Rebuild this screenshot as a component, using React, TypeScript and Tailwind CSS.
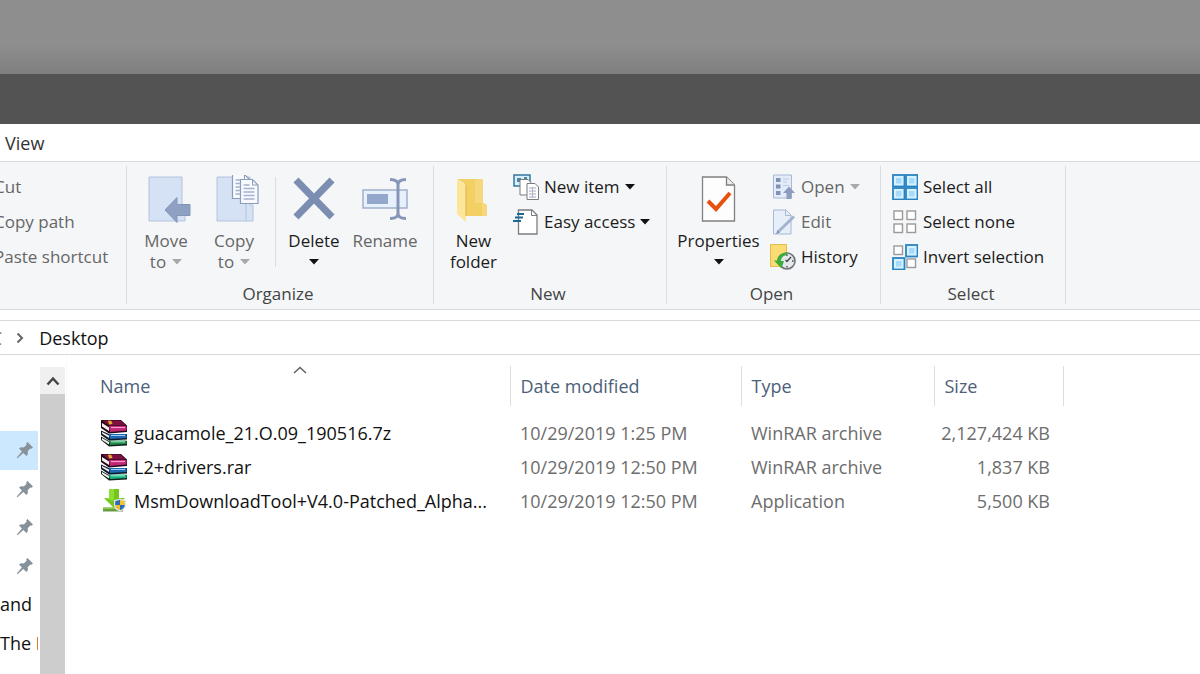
import { useState } from 'react'
import type { ReactNode } from 'react'
import clsx from 'clsx'

interface FileEntry {
  name: string
  modified: string
  type: string
  size: string
  kind: 'archive' | 'app'
  band?: string
}

const FILES: FileEntry[] = [
  { name: 'guacamole_21.O.09_190516.7z', modified: '10/29/2019 1:25 PM', type: 'WinRAR archive', size: '2,127,424 KB', kind: 'archive', band: '#1f8a4c' },
  { name: 'L2+drivers.rar', modified: '10/29/2019 12:50 PM', type: 'WinRAR archive', size: '1,837 KB', kind: 'archive', band: '#17b584' },
  { name: 'MsmDownloadTool+V4.0-Patched_Alpha...', modified: '10/29/2019 12:50 PM', type: 'Application', size: '5,500 KB', kind: 'app' },
]

/* ---------- icons ---------- */

function MoveToIcon() {
  return (
    <svg width="44" height="48" viewBox="0 0 44 48">
      <path d="M1 2h33v26l3 3v15H1z" fill="#d5e1f4" stroke="#b4c3dd" />
      <path d="M17 35 29 22.500v7h13v11H29v7z" fill="#8fa1c3" stroke="#8395b8" />
    </svg>
  )
}

function PageLines({ x, y }: { x: number; y: number }) {
  return (
    <g transform={`translate(${x} ${y})`}>
      <path d="M.5.5h12l5.500 5.500v18.500H.5z" fill="#f7faff" stroke="#8d9cb9" strokeWidth="1.200" />
      <path d="M12.500.5v5.500H18" fill="none" stroke="#8d9cb9" />
      <path d="M3.500 6h6M3.500 9.500h11M3.500 13h11M3.500 16.500h11M3.500 20h11" stroke="#a5b3cf" strokeWidth="1.400" />
    </g>
  )
}

function CopyToIcon() {
  return (
    <svg width="44" height="48" viewBox="0 0 44 48">
      <path d="M1 2h33v28h3v16H1z" fill="#d5e1f4" stroke="#b4c3dd" />
      <path d="M30 28v18" stroke="#b4c3dd" />
      <PageLines x={16} y={-1} />
      <PageLines x={24} y={4} />
    </svg>
  )
}

function DeleteIcon() {
  return (
    <svg width="44" height="48" viewBox="0 0 44 48">
      <path d="m4 5 36 37M40 5 4 42" stroke="#7c8db2" strokeWidth="7" />
    </svg>
  )
}

function RenameIcon() {
  return (
    <svg width="48" height="48" viewBox="0 0 48 48">
      <path d="M2 15h44v18H2z" fill="#e6f1fb" stroke="#9fb0cc" strokeWidth="1.500" />
      <path d="M6 19h21v10H6z" fill="#94a8cc" />
      <path d="M29 4.500c5 0 8 1 8 5v29c0 4-3 5-8 5M45 4.500c-5 0-8 1-8 5v29c0 4 3 5 8 5" fill="none" stroke="#8596b8" strokeWidth="3" />
    </svg>
  )
}

function NewFolderIcon() {
  return (
    <svg width="40" height="48" viewBox="0 0 40 48">
      <path d="M3 4h26v24l4 2v11H10V8z" fill="#f3d064" />
      <path d="M21 4h8v24l4 2v11h-5V28h-7z" fill="#f6d87c" />
      <path d="M3 4l9 6v37l-9-8z" fill="#fde59a" />
      <path d="M12 10v31" stroke="#dcb24a" />
    </svg>
  )
}

function PropertiesIcon() {
  return (
    <svg width="36" height="48" viewBox="0 0 36 48">
      <path d="M1.500 2h24l8 8v36h-32z" fill="#fdfdfe" stroke="#808080" strokeWidth="1.300" />
      <path d="M25.500 2v8h8" fill="#ececec" stroke="#808080" strokeWidth="1.300" />
      <path d="m7 26 8 8 14-16" fill="none" stroke="#e8500f" strokeWidth="4" />
    </svg>
  )
}

function NewItemIcon() {
  return (
    <svg width="26" height="26" viewBox="0 0 26 26">
      <path d="M1 1h16v11H1z" fill="#d9effa" stroke="#35779e" strokeWidth="1.500" />
      <path d="M4 4h4v4H4zM11 3h3v3h-3z" fill="#4a86a8" />
      <path d="M7 5.500h8l3 3V21H7z" fill="#fff" stroke="#7d7d7d" />
      <path d="M14 9.500h8l3.500 3.500v12.500H14z" fill="#fff" stroke="#7d7d7d" />
      <path d="M16 14h7M16 17h7M16 20h7M16 23h7" stroke="#b4c7e2" strokeWidth="1.400" />
      <path d="M19.500 13v11" stroke="#d9a7b0" />
    </svg>
  )
}

function EasyAccessIcon() {
  return (
    <svg width="26" height="26" viewBox="0 0 26 26">
      <path d="M5.500 1h13.500l5 5v19H5.500z" fill="#fff" stroke="#7d7d7d" strokeWidth="1.300" />
      <path d="M18.500 1v5.500H24" fill="none" stroke="#7d7d7d" />
      <path d="M4 5h7M2 8.500h8M0 12h8" stroke="#1f6a94" strokeWidth="2" />
    </svg>
  )
}

function OpenIcon() {
  return (
    <svg width="26" height="26" viewBox="0 0 26 26">
      <path d="M3.500 1h18v23h-18z" fill="#e3ecf8" stroke="#a9b8d3" />
      <path d="M6 4h4.500v4H6zM6 10.500h4.500v4H6zM6 17h4.500v4H6z" fill="#7f92b5" />
      <path d="M13 5h6M13 8h4M13 11.500h6" stroke="#bccae2" />
      <path d="m19 12.500 6 6.500h-3.500v6h-5v-6H13z" fill="#8c9dbf" />
    </svg>
  )
}

function EditIcon() {
  return (
    <svg width="26" height="26" viewBox="0 0 26 26">
      <path d="M3.500 1h12.500l5 5v19H3.500z" fill="#e6eefa" stroke="#a9b8d3" />
      <path d="M15.500 1v5.500H21" fill="none" stroke="#a9b8d3" />
      <path d="M8 23 24 7.500" stroke="#a3b3d0" strokeWidth="3" />
      <path d="m6 25 1.500-4 2.500 2.500z" fill="#8293b4" />
    </svg>
  )
}

function HistoryIcon() {
  return (
    <svg width="26" height="26" viewBox="0 0 26 26">
      <path d="M.5.500h16v22H.5z" fill="#fbdc74" stroke="#e2bd4d" />
      <circle cx="17" cy="17" r="8" fill="#e4e8ec" stroke="#6d7276" strokeWidth="1.600" />
      <path d="M17 10.500v1.500M17 22v1.500M22 17h1.500M15.500 16l1.500 1.500 4-4.500" fill="none" stroke="#444" strokeWidth="1.300" />
      <path d="M17 8.500c-6 0-9.500 3-10 8H4l7.500 8 2.500-7.500h-3c0-3 2-5.500 6-6z" fill="#3dab3d" />
    </svg>
  )
}

function SquaresIcon({ on }: { on: boolean[] }) {
  const spots = [[1, 1], [14, 1], [1, 14], [14, 14]]
  return (
    <svg width="26" height="26" viewBox="0 0 26 26">
      {spots.map(([x, y], i) =>
        on[i] ? (
          <g key={i}>
            <rect x={x} y={y} width="11.500" height="11.500" fill="#d6f1ff" stroke="#2a83c0" strokeWidth="1.800" />
            <rect x={x + 3} y={y + 3} width="5.500" height="5.500" fill="#a5daf8" />
          </g>
        ) : (
          <rect key={i} x={x + 1} y={y + 1} width="8.500" height="8.500" fill="#fff" stroke="#9a9a9a" strokeWidth="1.400" />
        ),
      )}
    </svg>
  )
}

function ArchiveIcon({ band }: { band: string }) {
  return (
    <svg width="28" height="28" viewBox="0 0 28 28" className="shrink-0">
      {/* bottom book */}
      <path d="M1 17.500 9 22h18v4.500L9 27.500 1 21z" fill="#12211b" />
      <path d="m2 19 7 4v2.500l-7-4.500z" fill="#f5f2ee" />
      <path d="M9 21.500h17.500V25L10 26z" fill={band} />
      <path d="M11 22.800h14" stroke="#a6ecc8" />
      {/* middle book */}
      <path d="M1 11.500 9 15h18v5.500L9 21.500 1 16z" fill="#10182b" />
      <path d="m2 13 7 3.500V19l-7-4.500z" fill="#f5f2ee" />
      <path d="M9 15h17.500v4L10 20z" fill="#1f68b4" />
      <path d="M11 16.500h14" stroke="#9cc9f2" />
      {/* top book */}
      <path d="M1 1h20l6 5.500v6.500L9 14.500 1 9z" fill="#240817" />
      <path d="M2 1.500h18.500l5.500 5H9z" fill="#7d1040" />
      <path d="M9 7h17.500v4.500L10 13z" fill="#c22677" />
      <path d="M11 8.500h14" stroke="#f29ac8" strokeWidth="1.200" />
      <path d="m2 4 7 4.500v3.500L2 7.500z" fill="#f5f2ee" />
      <path d="m8 1.500 3.500.500 1 3-3.500.5z" fill="#e0ac2e" />
    </svg>
  )
}

function AppIcon() {
  return (
    <svg width="28" height="28" viewBox="0 0 28 28" className="shrink-0">
      <path d="M9 2h10v9h6L14 21 4 11h5z" fill="#74c61c" />
      <path d="M9 2h5v12L4 11h5z" fill="#8fdc35" />
      <path d="M3 20.500h20v4H3z" fill="#6a9c42" />
      <path d="M3 20.500h20V22H3z" fill="#8ccf4a" />
      <path d="m20 11.500 6 1.800v4.700c0 3.500-3 5.500-6 6.500-3-1-6-3-6-6.500v-4.700z" fill="#dfe6ec" />
      <path d="m20 12.800-4.800 1.500v3.700H20z" fill="#2d6cb5" />
      <path d="m20 12.800 4.800 1.500v3.700H20z" fill="#f4c430" />
      <path d="M15.200 18H20v5.200c-2.500-.9-4.800-2.500-4.800-5.200z" fill="#f4b92c" />
      <path d="M24.800 18H20v5.200c2.500-.9 4.800-2.500 4.800-5.200z" fill="#2d6cb5" />
    </svg>
  )
}

function PinIcon() {
  return (
    <svg width="18" height="18" viewBox="0 0 18 18" className="shrink-0">
      <path d="m11.500 1 5.500 5.500-1.500 1.200-1.200-.3-2.600 2.800c.5 2.200.2 3.600-1.200 4.800L7.300 12 1.500 17.200l-.7-.7L5.900 10.500 3 7.600c1.300-1.300 2.800-1.600 4.800-1.100l2.800-2.700-.4-1.500z" fill="#87919a" />
    </svg>
  )
}

function Caret({ muted }: { muted?: boolean }) {
  return (
    <svg width="10" height="6" viewBox="0 0 10 6" className="shrink-0">
      <path d="M0 0h10L5 5.500z" fill={muted ? '#a9a9a9' : '#111'} />
    </svg>
  )
}

/* ---------- ribbon ---------- */

function RibbonGroup({ label, children }: { label?: string; children: ReactNode }) {
  return (
    <section className="flex flex-col overflow-hidden border-r border-[#dcdddf]">
      <div className="flex h-[118px] pt-[3px]">{children}</div>
      {label && <h2 className="pr-1 text-center text-[17px] leading-5 text-[#444]">{label}</h2>}
    </section>
  )
}

interface BigButtonProps {
  icon: ReactNode
  lines: string[]
  caret?: boolean
  disabled?: boolean
  className?: string
}

function BigButton({ icon, lines, caret, disabled, className }: BigButtonProps) {
  const inlineCaret = caret && lines.length > 1
  return (
    <button
      disabled={disabled}
      className={clsx('flex shrink-0 flex-col items-center pt-[6px] text-[17px] leading-[21px]', disabled ? 'text-[#666]' : 'text-[#1c1c1c]', className)}
    >
      <span className="mb-[7px] flex h-12">{icon}</span>
      {lines.map((line, i) => (
        <span key={line} className="flex items-center gap-[6px]">
          {line}
          {inlineCaret && i === lines.length - 1 && <Caret muted={disabled} />}
        </span>
      ))}
      {caret && !inlineCaret && <span className="pt-2"><Caret muted={disabled} /></span>}
    </button>
  )
}

interface SmallButtonProps {
  icon?: ReactNode
  label: string
  caret?: boolean
  disabled?: boolean
}

function SmallButton({ icon, label, caret, disabled }: SmallButtonProps) {
  return (
    <button
      disabled={disabled}
      className={clsx('flex h-[35px] items-center gap-[5px] text-[17px] whitespace-nowrap', disabled ? 'text-[#666]' : 'text-[#1c1c1c]')}
    >
      {icon}
      {label}
      {caret && <Caret muted={disabled} />}
    </button>
  )
}

function Ribbon() {
  return (
    <div className="grid grid-cols-[127px_307px_233px_214px_185px_1fr] border-y border-[#d9dadc] bg-[#f5f6f8] pt-1 pb-[5px]">
      <RibbonGroup>
        <div className="-ml-[6px]">
          <SmallButton label="Cut" disabled />
          <SmallButton label="Copy path" disabled />
          <SmallButton label="Paste shortcut" disabled />
        </div>
      </RibbonGroup>

      <RibbonGroup label="Organize">
        <BigButton className="ml-1 w-[70px]" icon={<span className="pl-2"><MoveToIcon /></span>} lines={['Move', 'to']} caret disabled />
        <BigButton className="w-[66px]" icon={<span className="pl-2"><CopyToIcon /></span>} lines={['Copy', 'to']} caret disabled />
        <div className="mr-1 ml-2 mt-2 h-[90px] w-px bg-[#dcdddf]" />
        <BigButton className="w-[68px]" icon={<DeleteIcon />} lines={['Delete']} caret />
        <BigButton className="w-[74px]" icon={<RenameIcon />} lines={['Rename']} disabled />
      </RibbonGroup>

      <RibbonGroup label="New">
        <BigButton className="w-[79px]" icon={<NewFolderIcon />} lines={['New', 'folder']} />
        <div>
          <SmallButton icon={<NewItemIcon />} label="New item" caret />
          <SmallButton icon={<EasyAccessIcon />} label="Easy access" caret />
        </div>
      </RibbonGroup>

      <RibbonGroup label="Open">
        <BigButton className="w-[103px]" icon={<PropertiesIcon />} lines={['Properties']} caret />
        <div>
          <SmallButton icon={<OpenIcon />} label="Open" caret disabled />
          <SmallButton icon={<EditIcon />} label="Edit" disabled />
          <SmallButton icon={<HistoryIcon />} label="History" />
        </div>
      </RibbonGroup>

      <RibbonGroup label="Select">
        <div className="pl-[11px]">
          <SmallButton icon={<SquaresIcon on={[true, true, true, true]} />} label="Select all" />
          <SmallButton icon={<SquaresIcon on={[false, false, false, false]} />} label="Select none" />
          <SmallButton icon={<SquaresIcon on={[false, true, true, false]} />} label="Invert selection" />
        </div>
      </RibbonGroup>
    </div>
  )
}

/* ---------- body ---------- */

function NavPane() {
  return (
    <nav className="flex w-[66px] shrink-0 pt-3">
      <div className="w-10 shrink-0 pt-16 pr-[2px]">
        <div className="grid h-[231px] grid-cols-1 grid-rows-6 overflow-hidden text-lg">
          {[0, 1, 2, 3].map((i) => (
            <div key={i} className={clsx('flex items-center justify-end pr-1', i === 0 && 'bg-[#cce8ff]')}>
              <PinIcon />
            </div>
          ))}
          <div className="flex items-center text-[#111]">and</div>
          <div className="flex items-center whitespace-nowrap text-[#111]">The F</div>
        </div>
      </div>
      <div className="flex w-[25px] flex-col bg-[#cdcdcd]">
        <button className="flex h-[27px] items-center justify-center bg-[#f0f0f0]" aria-label="Scroll up">
          <svg width="14" height="10" viewBox="0 0 14 10">
            <path d="m1.500 8.500 5.500-6 5.500 6" fill="none" stroke="#454545" strokeWidth="2.500" />
          </svg>
        </button>
      </div>
    </nav>
  )
}

function FileTable() {
  const [ascending, setAscending] = useState(true)
  const files = ascending ? FILES : [...FILES].reverse()

  return (
    <table className="w-[973px] table-fixed text-left text-lg whitespace-nowrap text-[#6d6d6d]">
      <colgroup>
        <col className="w-[420px]" />
        <col className="w-[231px]" />
        <col className="w-[193px]" />
        <col className="w-[129px]" />
      </colgroup>
      <thead className="text-[#4c607a]">
        <tr className="h-10">
          <th className="relative border-r border-[#dedede] pl-[10px] font-normal">
            <button onClick={() => setAscending(!ascending)}>Name</button>
            <svg width="14" height="8" viewBox="0 0 14 8" className={clsx('absolute inset-x-0 top-0 mx-auto', !ascending && 'rotate-180')}>
              <path d="m1 7 6-5.500L13 7" fill="none" stroke="#606060" strokeWidth="1.500" />
            </svg>
          </th>
          <th className="border-r border-[#dedede] pl-[10px] font-normal"><button>Date modified</button></th>
          <th className="border-r border-[#dedede] pl-[10px] font-normal"><button>Type</button></th>
          <th className="border-r border-[#dedede] pl-[10px] font-normal"><button>Size</button></th>
        </tr>
      </thead>
      <tbody className="before:block before:h-[10px] before:content-['']">
        {files.map((file) => (
          <tr key={file.name} className="h-[34px]">
            <td className="pl-[10px] text-[#111]">
              <div className="flex items-center gap-[6px]">
                {file.kind === 'archive' ? <ArchiveIcon band={file.band ?? '#1f8a4c'} /> : <AppIcon />}
                {file.name}
              </div>
            </td>
            <td className="pl-[10px]">{file.modified}</td>
            <td className="pl-[10px]">{file.type}</td>
            <td className="pr-[13px] text-right">{file.size}</td>
          </tr>
        ))}
      </tbody>
    </table>
  )
}

export default function App() {
  return (
    <div className="flex min-h-screen flex-col overflow-hidden bg-white font-['Open_Sans','Noto_Sans',sans-serif]">
      <div className="h-[74px] bg-linear-to-b from-[#8e8e8e] from-60% to-[#7f7f7f]" />
      <header className="h-[50px] bg-[#535353]" />
      <div className="flex h-[37px] items-center pl-[5px]">
        <button className="text-lg text-[#333]">View</button>
      </div>
      <Ribbon />

      <div className="mt-[10px] flex h-[35px] items-center overflow-hidden border-y border-[#d9d9d9] text-lg">
        <button className="-ml-[20px] text-[#6d6d6d]">PC</button>
        <svg width="8" height="12" viewBox="0 0 8 12" className="mr-[15px] ml-[14px]">
          <path d="m1.500 1.500 4.500 4.500-4.500 4.500" fill="none" stroke="#666" strokeWidth="2" />
        </svg>
        <button className="text-[#111]">Desktop</button>
      </div>

      <div className="flex grow">
        <NavPane />
        <main className="grow border-l border-[#fafafa] pt-[11px] pl-[23px]">
          <FileTable />
        </main>
      </div>
    </div>
  )
}
